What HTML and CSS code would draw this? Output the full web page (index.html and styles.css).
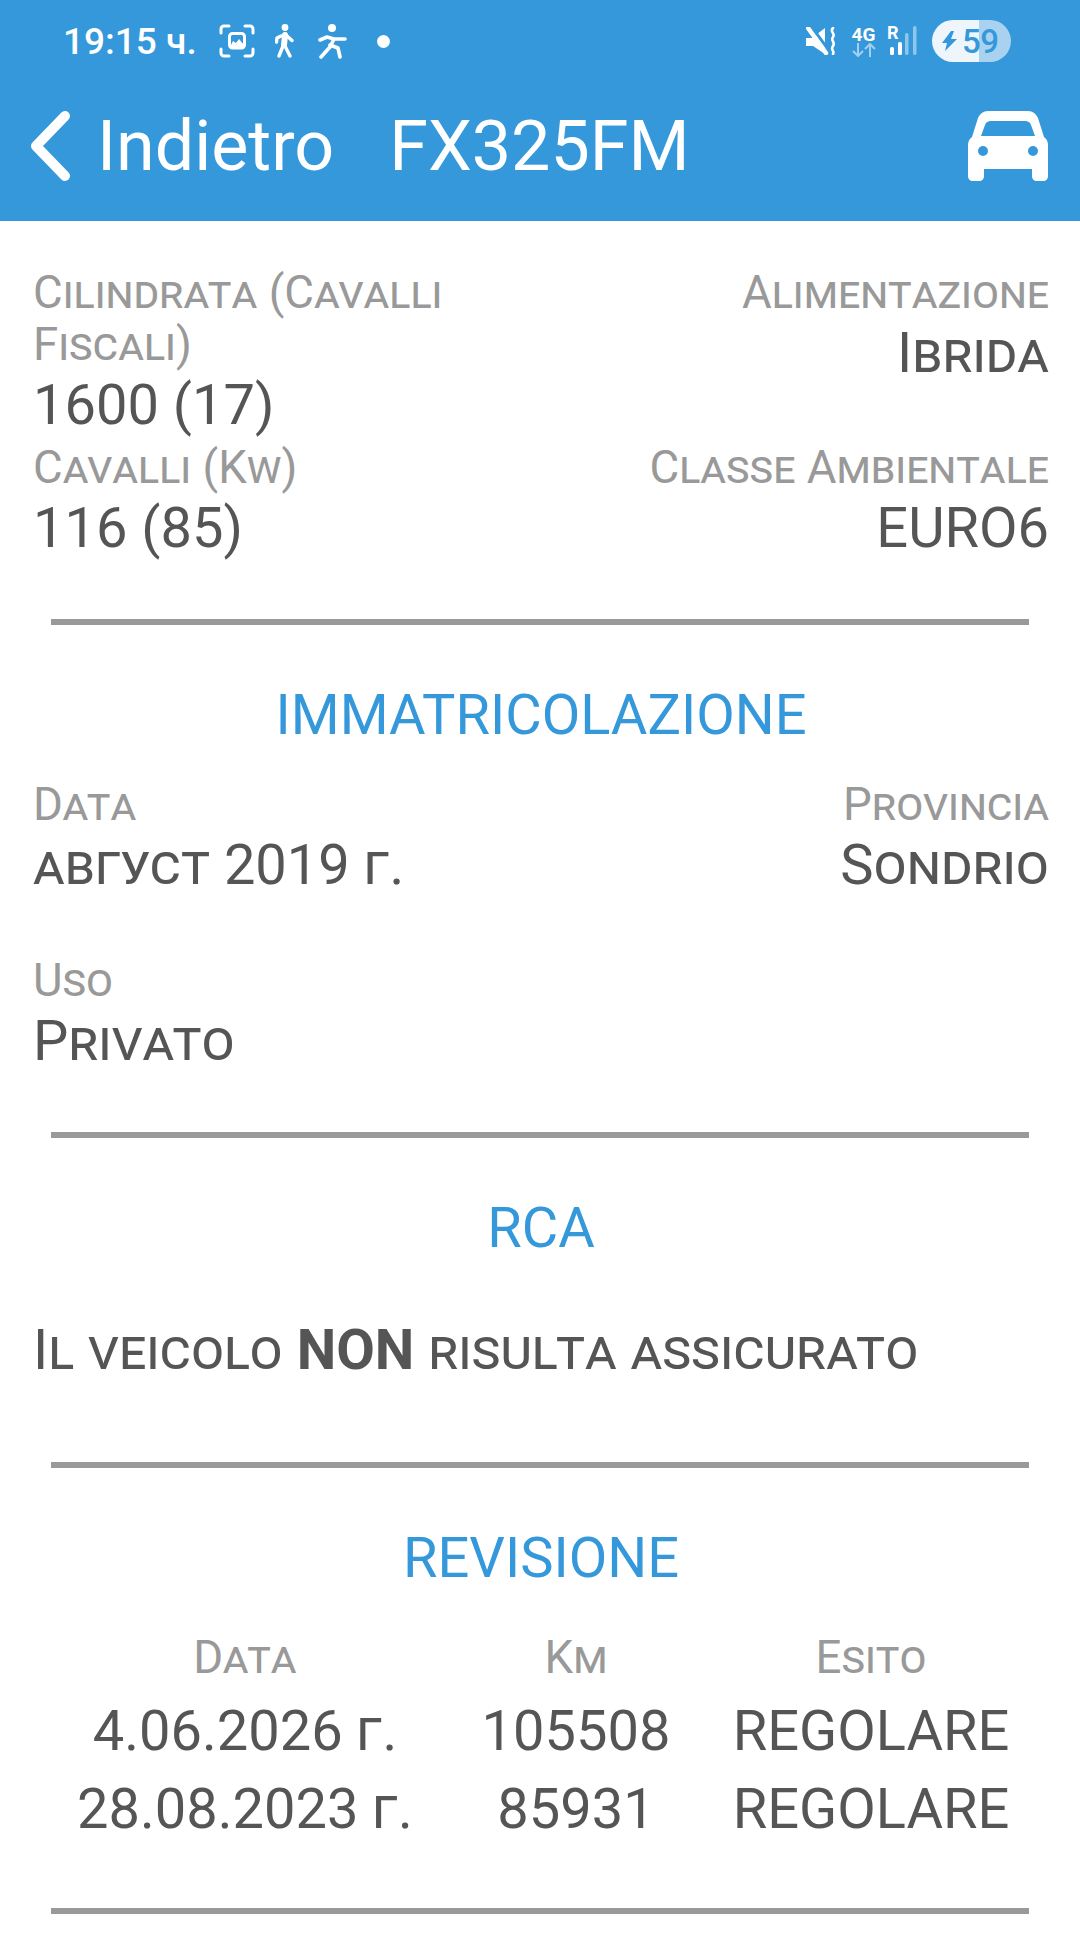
FILE: index.html
```html
<!DOCTYPE html>
<html lang="en">
<head>
    <meta charset="UTF-8">
    <meta name="viewport" content="width=device-width, initial-scale=1.0">
    <title>FX325FM</title>
    <link rel="stylesheet" href="styles.css">
</head>
<body>
<header class="topbar">
    <div class="statusbar">
        <span class="clock">19:15 ч.</span>
        <svg class="st-icon st-shot" viewBox="0 0 36 34" fill="none" stroke="#fff" stroke-width="3" stroke-linecap="round">
            <path d="M2 9V5a3 3 0 0 1 3-3h5M26 2h5a3 3 0 0 1 3 3v4M34 25v4a3 3 0 0 1-3 3h-5M10 32H5a3 3 0 0 1-3-3v-4"/>
            <rect x="10.5" y="9.5" width="15" height="14.5" rx="3"/>
            <path d="M11 23l3-6 3 2 3-4 5 6v2z" fill="#fff" stroke="none"/>
        </svg>
        <svg class="st-icon st-walk" viewBox="0 0 19 34" fill="none" stroke="#fff" stroke-width="3.4" stroke-linecap="round" stroke-linejoin="round">
            <circle cx="10" cy="3.5" r="3.4" fill="#fff" stroke="none"/>
            <path d="M10 11l-1 10" stroke-width="6"/>
            <path d="M8 22L4 32M10 22l5 10M12 12l5 4.5M6 12l-4 2-.5 4"/>
        </svg>
        <svg class="st-icon st-run" viewBox="0 0 30 35" fill="none" stroke="#fff" stroke-width="3.6" stroke-linecap="round" stroke-linejoin="round">
            <circle cx="14" cy="4" r="4" fill="#fff" stroke="none"/>
            <path d="M2 16l7-3 7 2-4 8"/>
            <path d="M12 23L3 33M12 21l8 3 2 9M17 15h10"/>
        </svg>
        <span class="st-dot"></span>
        <span class="st-spacer"></span>
        <svg class="st-icon st-mute" viewBox="0 0 30 28" fill="#fff">
            <path d="M0 11h6L19 1v26L7 19H0z"/>
            <path d="M5 -1l19 26" fill="none" stroke="#3498db" stroke-width="3"/>
            <path d="M2 1l18 25" fill="none" stroke="#fff" stroke-width="4.5" stroke-linecap="round"/>
            <path d="M27 1c-4 4 3 5 0 9s3 5 0 9 2 5 0 8" fill="none" stroke="#fff" stroke-width="2.6" stroke-linecap="round"/>
        </svg>
        <span class="st-net">
            <span class="st-net-label">4G</span>
            <svg viewBox="0 0 24 14" fill="none" stroke="#fff" stroke-width="2" opacity="0.55">
                <path d="M6 0v13M1 8l5 5 5-5M18 14V1M13 6l5-5 5 5"/>
            </svg>
        </span>
        <span class="st-signal">
            <span class="st-roam">R</span>
            <svg viewBox="0 0 30 30" fill="#fff">
                <rect x="3" y="21" width="4" height="8" rx="1.5"/>
                <rect x="11" y="16" width="4" height="13" rx="1.5"/>
                <rect x="18" y="7" width="3.5" height="22" rx="1.7" opacity="0.45"/>
                <rect x="26" y="0" width="3.5" height="29" rx="1.7" opacity="0.45"/>
            </svg>
        </span>
        <span class="battery">
            <svg class="bolt" viewBox="0 0 15 20" fill="#3498db"><path d="M9 0L0 12h5l-2 8 12-12H9l3-8z"/></svg>
            <span class="battery-num">59</span>
        </span>
    </div>
    <nav class="navbar">
        <svg class="back" viewBox="0 0 40 70" fill="none" stroke="#fff" stroke-width="10" stroke-linecap="round" stroke-linejoin="round">
            <path d="M34 5L5 35l29 30"/>
        </svg>
        <span class="back-label">Indietro</span>
        <span class="plate">FX325FM</span>
        <svg class="car" viewBox="0 0 80 70" fill="#fff">
            <path fill-rule="evenodd" d="M20 0h40c5 0 8 3 10 7l6 19c3 2 4 5 4 8v31c0 3-2 5-5 5h-6c-3 0-5-2-5-5v-7H16v7c0 3-2 5-5 5H5c-3 0-5-2-5-5V34c0-3 1-6 4-8l6-19c2-4 5-7 10-7zm3 10c-3 0-5 1-6 4l-4 11h54l-4-11c-1-3-3-4-6-4zM15 35a5 5 0 1 0 0 10 5 5 0 0 0 0-10zm50 0a5 5 0 1 0 0 10 5 5 0 0 0 0-10z"/>
        </svg>
    </nav>
</header>

<main class="content">
    <section class="block block-first">
        <div class="fields fields-tight">
            <div class="field">
                <div class="label">Cilindrata (Cavalli Fiscali)</div>
                <div class="value">1600 (17)</div>
            </div>
            <div class="field right">
                <div class="label">Alimentazione</div>
                <div class="value">Ibrida</div>
            </div>
            <div class="field">
                <div class="label">Cavalli (Kw)</div>
                <div class="value">116 (85)</div>
            </div>
            <div class="field right">
                <div class="label">Classe Ambientale</div>
                <div class="value">EURO6</div>
            </div>
        </div>
    </section>
    <hr class="divider">

    <section class="block">
        <h2 class="heading">IMMATRICOLAZIONE</h2>
        <div class="fields fields-spaced">
            <div class="field">
                <div class="label">Data</div>
                <div class="value">август 2019 г.</div>
            </div>
            <div class="field right">
                <div class="label">Provincia</div>
                <div class="value">Sondrio</div>
            </div>
            <div class="field">
                <div class="label">Uso</div>
                <div class="value">Privato</div>
            </div>
        </div>
    </section>
    <hr class="divider">

    <section class="block">
        <h2 class="heading">RCA</h2>
        <p class="notice">Il veicolo <b>NON</b> risulta assicurato</p>
    </section>
    <hr class="divider">

    <section class="block">
        <h2 class="heading">REVISIONE</h2>
        <div class="revisions">
            <div class="label">Data</div>
            <div class="label">Km</div>
            <div class="label">Esito</div>
            <div class="value">4.06.2026 г.</div>
            <div class="value">105508</div>
            <div class="value">REGOLARE</div>
            <div class="value">28.08.2023 г.</div>
            <div class="value">85931</div>
            <div class="value">REGOLARE</div>
        </div>
    </section>
    <hr class="divider">
</main>
</body>
</html>
```

FILE: styles.css
```css
html, body {
    margin: 0;
    background-color: white;
}
body {
    font-family: Roboto, sans-serif;
    height: 1943px;
    overflow: hidden;
}
.topbar {
    background-color: #3498db;
    color: white;
    height: 221px;
}
.statusbar {
    display: flex;
    align-items: center;
    height: 82px;
    padding: 0 69px 0 63px;
}
.clock {
    font-size: 37px;
    font-weight: 500;
    width: 156px;
    white-space: nowrap;
}
.st-icon {
    display: block;
    flex: none;
}
.st-shot { width: 36px; height: 34px; }
.st-walk { width: 19px; height: 34px; margin-left: 20px; }
.st-run { width: 30px; height: 35px; margin-left: 24px; }
.st-dot {
    width: 13px;
    height: 13px;
    border-radius: 50%;
    background-color: white;
    margin-left: 29px;
}
.st-spacer { flex: 1; }
.st-mute { width: 30px; height: 28px; }
.st-net {
    display: flex;
    flex-direction: column;
    align-items: center;
    width: 25px;
    margin-left: 15px;
}
.st-net-label {
    font-size: 19px;
    font-weight: 700;
    line-height: 17px;
}
.st-net svg { display: block; width: 24px; height: 14px; }
.st-signal {
    position: relative;
    width: 30px;
    height: 30px;
    margin-left: 11px;
}
.st-signal svg { display: block; width: 30px; height: 30px; }
.st-roam {
    position: absolute;
    left: 0;
    top: -2px;
    font-size: 18px;
    font-weight: 700;
    line-height: 18px;
}
.battery {
    display: flex;
    align-items: center;
    gap: 5px;
    width: 79px;
    height: 42px;
    box-sizing: border-box;
    padding-left: 10px;
    margin-left: 15px;
    border-radius: 21px;
    background: linear-gradient(to right, #eef6fc 59%, #a8d2f0 59%);
    color: #3498db;
}
.bolt { width: 15px; height: 20px; flex: none; }
.battery-num {
    font-size: 33px;
    font-weight: 500;
    letter-spacing: -0.5px;
}
.navbar {
    display: flex;
    align-items: center;
    height: 139px;
    padding: 0 32px 0 31px;
}
.back { width: 40px; height: 70px; flex: none; margin-top: -12px; }
.back-label, .plate {
    font-size: 70px;
    font-weight: 400;
    margin-top: -12px;
}
.back-label { margin-left: 26px; }
.plate { margin-left: 55px; flex: 1; }
.car { width: 80px; height: 70px; flex: none; margin-top: -12px; }

.content {
    padding: 46px 31px 0 33px;
    font-variant: small-caps;
}
.fields {
    display: grid;
    grid-template-columns: 1fr 1fr;
}
.fields-tight { row-gap: 3px; }
.fields-spaced { row-gap: 56px; }
.field.right { text-align: right; }
.label {
    color: #999;
    font-size: 45.6px;
    line-height: 52px;
}
.value {
    color: #555;
    font-size: 56px;
    line-height: 68px;
}
.divider {
    height: 6px;
    margin: 57px 20px 0 18px;
    border: none;
    background-color: #999;
}
.heading {
    color: #3498db;
    font-size: 56px;
    font-weight: 400;
    line-height: 64px;
    text-align: center;
    margin: 58px 0 32px;
    font-variant: normal;
}
.notice {
    color: #555;
    font-size: 56px;
    line-height: 64px;
    margin: 58px 0 80px;
}
.notice b { font-variant: normal; }
.revisions {
    display: grid;
    grid-template-columns: 424px 238px 352px;
    text-align: center;
    margin: 42px 0 60px;
}
.revisions .label { margin-bottom: 8px; }
.revisions .value { line-height: 78px; }
```
